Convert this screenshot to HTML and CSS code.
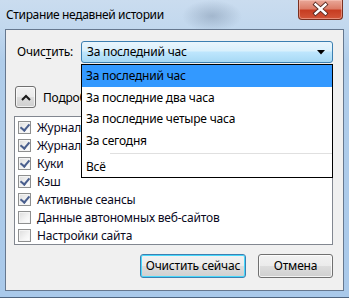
FILE: index.html
```html
<!DOCTYPE html>
<html lang="ru">
<head>
<meta charset="utf-8">
<title>Стирание недавней истории</title>
<link rel="stylesheet" href="styles.css">
</head>
<body>
<div class="window">
  <div class="titlebar">
    <span class="title">Стирание недавней истории</span>
    <span class="close">
      <svg width="45" height="20" viewBox="0 0 45 20">
        <path d="M17.5 5.5 L27.5 14.5 M27.5 5.5 L17.5 14.5" stroke="#5a2a22" stroke-width="4.2" stroke-linecap="square"/>
        <path d="M17.5 5.5 L27.5 14.5 M27.5 5.5 L17.5 14.5" stroke="#ffffff" stroke-width="2.4" stroke-linecap="square"/>
      </svg>
    </span>
  </div>
  <div class="client">
    <div class="clear-row">
      <span class="clear-label">Очис<u>т</u>ить:</span>
      <div class="select">
        <span class="select-text">За последний час</span>
        <svg class="select-arrow" width="8" height="5" viewBox="0 0 8 5"><path d="M0 0 H8 L4 4.5 Z" fill="#000"/></svg>
      </div>
    </div>
    <div class="details-row">
      <span class="details-btn">
        <svg width="10" height="7" viewBox="0 0 10 7"><path d="M1 6 L5 2 L9 6" fill="none" stroke="#1a1a1a" stroke-width="2"/></svg>
      </span>
      <span class="details-text">Подробности</span>
    </div>
    <ul class="items">
      <li class="item"><span class="cb checked"></span>Журнал посещений и загрузок</li>
      <li class="item"><span class="cb checked"></span>Журнал форм и поиска</li>
      <li class="item"><span class="cb checked"></span>Куки</li>
      <li class="item"><span class="cb checked"></span>Кэш</li>
      <li class="item"><span class="cb checked"></span>Активные сеансы</li>
      <li class="item"><span class="cb"></span>Данные автономных веб-сайтов</li>
      <li class="item"><span class="cb"></span>Настройки сайта</li>
    </ul>
    <div class="buttons">
      <span class="btn btn-default btn-clear">Очистить сейчас</span>
      <span class="btn btn-cancel">Отмена</span>
    </div>
    <ul class="dropdown">
      <li class="opt opt-active">За последний час</li>
      <li class="opt">За последние два часа</li>
      <li class="opt">За последние четыре часа</li>
      <li class="opt">За сегодня</li>
      <li class="opt-sep"></li>
      <li class="opt opt-last">Всё</li>
    </ul>
  </div>
</div>
</body>
</html>
```

FILE: styles.css
```css
* { box-sizing: border-box; }
html, body { margin: 0; padding: 0; }
body {
  width: 349px;
  height: 298px;
  overflow: hidden;
  font-family: "Noto Sans", "Open Sans", sans-serif;
  font-size: 12px;
  letter-spacing: -0.2px;
  color: #000;
}
ul { list-style: none; margin: 0; padding: 0; }

.window {
  width: 349px;
  height: 298px;
  background:
    radial-gradient(ellipse 30px 16px at 212px 16px, rgba(120,140,165,0.45), rgba(120,140,165,0) 100%),
    linear-gradient(180deg, #cadcef 0px, #c2d8ee 28px, #b0cdea 60px, #a9c9ea 298px);
  border-bottom: 1px solid #4f6580;
}

.titlebar {
  height: 29px;
  display: flex;
  justify-content: space-between;
  align-items: flex-start;
  padding-left: 6px;
  padding-right: 6px;
}
.title {
  margin-top: 7px;
  line-height: 16px;
  font-size: 12px;
  letter-spacing: -0.35px;
  color: #000;
}
.close {
  width: 45px;
  height: 20px;
  border: 1px solid #7a3020;
  border-top: none;
  border-radius: 0 0 4px 4px;
  background: linear-gradient(180deg, #e9a899 0%, #dc7d68 45%, #c73d22 55%, #d2563a 100%);
  box-shadow: inset 0 0 0 1px rgba(255,210,200,0.45);
  display: block;
  position: relative;
}
.close svg { position: absolute; left: -1px; top: -1px; }

.client {
  position: relative;
  margin: 0 5px;
  height: 262px;
  border: 1px solid #66788f;
  background: #f0f0f0;
  padding: 11px 10px 12px 0;
  display: flex;
  flex-direction: column;
}

.clear-row {
  display: flex;
  align-items: center;
  height: 22px;
}
.clear-label {
  width: 75px;
  padding-left: 11px;
  line-height: 22px;
}
.clear-label u { text-decoration: underline; text-underline-offset: 2px; }
.select {
  width: 252px;
  height: 22px;
  border: 1px solid #3c7fb1;
  border-radius: 3px;
  background: linear-gradient(180deg, #eaf6fd 0%, #d9f0fc 45%, #bee6fd 50%, #a7d9f5 100%);
  display: flex;
  align-items: center;
  justify-content: space-between;
  padding: 0 7px 0 5px;
}
.select-text { line-height: 20px; }
.select-arrow { display: block; }

.details-row {
  display: flex;
  align-items: center;
  margin-top: 23px;
  height: 22px;
  padding-left: 9px;
}
.details-btn {
  width: 21px;
  height: 22px;
  border: 1px solid #707070;
  border-radius: 3px;
  background: linear-gradient(180deg, #f2f2f2 0%, #ebebeb 50%, #dddddd 51%, #cfcfcf 100%);
  box-shadow: inset 0 0 0 1px rgba(255,255,255,0.7);
  display: flex;
  align-items: center;
  justify-content: center;
}
.details-btn svg { display: block; }
.details-text { margin-left: 7px; }

.items {
  margin-top: 8px;
  margin-left: 8px;
  width: 319px;
  height: 129px;
  border: 1px solid #828790;
  background: #fff;
  padding: 1px 0;
}
.item {
  height: 18px;
  display: flex;
  align-items: center;
  padding-left: 3px;
  white-space: nowrap;
  color: #0a0a1e;
}
.cb {
  width: 13px;
  height: 13px;
  margin-right: 6px;
  border: 1px solid #8e8f8f;
  background: linear-gradient(135deg, #dcdcdc 0%, #f4f4f4 60%, #ffffff 100%);
  box-shadow: inset 0 0 0 1px #f4f4f4;
  flex: none;
  position: relative;
}
.cb.checked::after {
  content: "";
  position: absolute;
  left: 3px;
  top: 0px;
  width: 4px;
  height: 7px;
  border-right: 2px solid #4a5f8e;
  border-bottom: 2px solid #4a5f8e;
  transform: rotate(40deg);
}

.buttons {
  margin-top: 9px;
  display: flex;
  justify-content: flex-end;
  gap: 12px;
}
.btn {
  height: 24px;
  border: 1px solid #707070;
  border-radius: 3px;
  background: linear-gradient(180deg, #f2f2f2 0%, #ebebeb 50%, #dddddd 51%, #cfcfcf 100%);
  box-shadow: inset 0 0 0 1px rgba(255,255,255,0.75);
  display: flex;
  align-items: center;
  justify-content: center;
  line-height: 16px;
}
.btn-default {
  border-color: #3c7fb1;
  box-shadow: inset 0 0 0 1px #48d8fb;
}
.btn-clear { width: 106px; }
.btn-cancel { width: 75px; }

.dropdown {
  position: absolute;
  left: 75px;
  top: 34px;
  width: 252px;
  border: 1px solid #000;
  background: #fff;
}
.opt {
  height: 21.5px;
  line-height: 21.5px;
  padding-left: 4px;
  white-space: nowrap;
}
.opt-last {
  height: 21px;
  line-height: 21px;
}
.opt-active { background: #3399ff; }
.opt-sep {
  height: 5px;
  padding-top: 2px;
  padding-left: 28px;
}
.opt-sep::before {
  content: "";
  display: block;
  height: 1px;
  background: #e0e0e0;
}
```
